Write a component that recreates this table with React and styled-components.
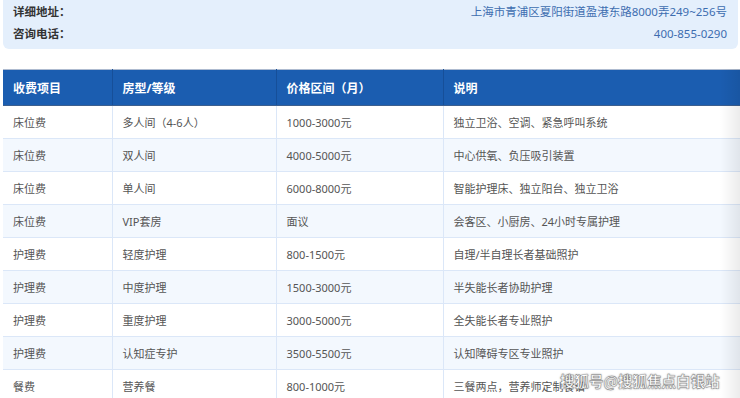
import React from 'react';
import styled, { createGlobalStyle } from 'styled-components';

const GlobalStyle = createGlobalStyle`
  html, body {
    margin: 0;
    padding: 0;
    background: #fff;
  }
  body {
    font-family: "Noto Sans", "Noto Sans CJK SC", sans-serif;
  }
`;

const rows = [
  ['床位费', '多人间（4-6人）', '1000-3000元', '独立卫浴、空调、紧急呼叫系统'],
  ['床位费', '双人间', '4000-5000元', '中心供氧、负压吸引装置'],
  ['床位费', '单人间', '6000-8000元', '智能护理床、独立阳台、独立卫浴'],
  ['床位费', 'VIP套房', '面议', '会客区、小厨房、24小时专属护理'],
  ['护理费', '轻度护理', '800-1500元', '自理/半自理长者基础照护'],
  ['护理费', '中度护理', '1500-3000元', '半失能长者协助护理'],
  ['护理费', '重度护理', '3000-5000元', '全失能长者专业照护'],
  ['护理费', '认知症专护', '3500-5500元', '认知障碍专区专业照护'],
  ['餐费', '营养餐', '800-1000元', '三餐两点，营养师定制食谱'],
];

const Page = styled.div`
  position: relative;
  height: 398px;
  overflow: hidden;
  padding-left: 3px;
`;

const InfoCard = styled.div`
  margin-right: 2px;
  background: #e4effc;
  border-radius: 0 0 6px 6px;
  padding: 0 11px 5px 10px;
`;

const InfoRow = styled.div`
  display: flex;
  justify-content: space-between;
  align-items: center;
  height: 22px;
  font-size: 11.5px;
`;

const InfoLabel = styled.span`
  font-weight: 700;
  color: #333;
`;

const InfoValue = styled.span`
  color: #3d6db0;
`;

const TableWrap = styled.div`
  position: relative;
  margin-top: 20px;
`;

const Table = styled.table`
  width: 760px;
  border-collapse: collapse;
  table-layout: fixed;
  font-size: 11px;
  color: #555;
  border-top: 1px solid #aebbd0;
`;

const Head = styled.th`
  box-sizing: border-box;
  background: #1b5db0;
  color: #fff;
  font-weight: 700;
  font-size: 12px;
  text-align: left;
  height: 36px;
  padding: 0 10px;
  border-right: 1px solid #164f99;
  border-bottom: 1px solid #3d5f8e;
  &:last-child {
    border-right: none;
  }
`;

const Row = styled.tr`
  background: ${(p) => (p.$alt ? '#f3f8fe' : '#fff')};
`;

const Cell = styled.td`
  box-sizing: border-box;
  height: 33px;
  padding: 0 10px;
  border-bottom: 1px solid #dbe7f8;
  border-right: 1px solid #dbe7f8;
  white-space: nowrap;
  &:last-child {
    border-right: none;
  }
`;

const Fade = styled.div`
  position: absolute;
  top: 0;
  right: 0;
  bottom: 0;
  width: 20px;
  background: linear-gradient(to right, rgba(0, 0, 0, 0), rgba(0, 0, 0, 0.08));
  pointer-events: none;
`;

const Watermark = styled.div`
  position: absolute;
  left: 560px;
  top: 371px;
  font-size: 14.5px;
  font-weight: 700;
  line-height: 20px;
  color: #fff;
  -webkit-text-stroke: 0.4px #777;
  text-shadow: 0 0 2px rgba(0, 0, 0, 0.5);
  font-family: "Noto Sans CJK SC", sans-serif;
  white-space: nowrap;
`;

const widths = [109, 164, 167, 320];
const heads = ['收费项目', '房型/等级', '价格区间（月）', '说明'];

export default function App() {
  return (
    <Page>
      <GlobalStyle />
      <InfoCard>
        <InfoRow>
          <InfoLabel>详细地址：</InfoLabel>
          <InfoValue>上海市青浦区夏阳街道盈港东路8000弄249~256号</InfoValue>
        </InfoRow>
        <InfoRow>
          <InfoLabel>咨询电话：</InfoLabel>
          <InfoValue>400-855-0290</InfoValue>
        </InfoRow>
      </InfoCard>
      <TableWrap>
        <Table>
          <colgroup>
            {widths.map((w, i) => (
              <col key={i} style={{ width: w }} />
            ))}
          </colgroup>
          <thead>
            <tr>
              {heads.map((h) => (
                <Head key={h}>{h}</Head>
              ))}
            </tr>
          </thead>
          <tbody>
            {rows.map((r, i) => (
              <Row key={i} $alt={i % 2 === 1}>
                {r.map((c, j) => (
                  <Cell key={j}>{c}</Cell>
                ))}
              </Row>
            ))}
          </tbody>
        </Table>
        <Fade />
      </TableWrap>
      <Watermark>搜狐号@搜狐焦点白银站</Watermark>
    </Page>
  );
}
